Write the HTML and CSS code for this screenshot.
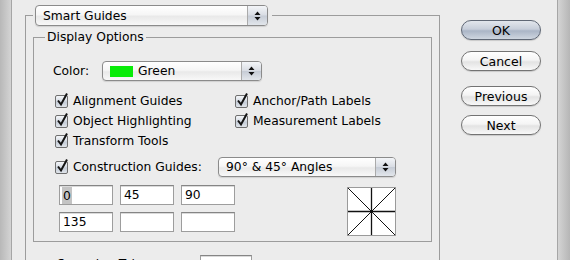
FILE: index.html
```html
<!DOCTYPE html>
<html lang="en">
<head>
  <meta charset="UTF-8">
  <title>Smart Guides</title>
  <link rel="stylesheet" href="styles.css">
</head>
<body>

  <div class="window">
    <fieldset class="group group-outer">
      <legend class="outer-legend">
        <div class="popup popup-smart">
          <span class="popup-label">Smart Guides</span>
          <span class="popup-arrows">
            <svg width="7" height="10" viewBox="0 0 7 10"><path d="M3.5 0.5 L6.5 4 L0.5 4 Z M0.5 6 L6.5 6 L3.5 9.5 Z" fill="#111"/></svg>
          </span>
        </div>
      </legend>

      <div class="outer-body">
        <fieldset class="group group-inner">
          <legend class="group-title">Display Options</legend>
          <div class="inner-body">

            <div class="color-row">
              <span class="row-label">Color:</span>
              <div class="popup popup-color">
                <span class="popup-label"><span class="swatch"></span>Green</span>
                <span class="popup-arrows">
                  <svg width="7" height="10" viewBox="0 0 7 10"><path d="M3.5 0.5 L6.5 4 L0.5 4 Z M0.5 6 L6.5 6 L3.5 9.5 Z" fill="#111"/></svg>
                </span>
              </div>
            </div>

            <div class="check-grid">
              <label class="check-item"><span class="checkbox"><svg viewBox="0 0 12 14"><path d="M2 7.5 L5 11.5 L11 0.5"/></svg></span>Alignment Guides</label>
              <label class="check-item"><span class="checkbox"><svg viewBox="0 0 12 14"><path d="M2 7.5 L5 11.5 L11 0.5"/></svg></span>Anchor/Path Labels</label>
              <label class="check-item"><span class="checkbox"><svg viewBox="0 0 12 14"><path d="M2 7.5 L5 11.5 L11 0.5"/></svg></span>Object Highlighting</label>
              <label class="check-item"><span class="checkbox"><svg viewBox="0 0 12 14"><path d="M2 7.5 L5 11.5 L11 0.5"/></svg></span>Measurement Labels</label>
              <label class="check-item"><span class="checkbox"><svg viewBox="0 0 12 14"><path d="M2 7.5 L5 11.5 L11 0.5"/></svg></span>Transform Tools</label>
            </div>

            <div class="construction-row">
              <label class="check-item"><span class="checkbox"><svg viewBox="0 0 12 14"><path d="M2 7.5 L5 11.5 L11 0.5"/></svg></span>Construction Guides:</label>
              <div class="popup popup-angles">
                <span class="popup-label">90° &amp; 45° Angles</span>
                <span class="popup-arrows">
                  <svg width="7" height="10" viewBox="0 0 7 10"><path d="M3.5 0.5 L6.5 4 L0.5 4 Z M0.5 6 L6.5 6 L3.5 9.5 Z" fill="#111"/></svg>
                </span>
              </div>
            </div>

            <div class="angles">
              <div class="angle-fields">
                <span class="field"><span class="selected">0</span></span>
                <span class="field">45</span>
                <span class="field">90</span>
                <span class="field">135</span>
                <span class="field"></span>
                <span class="field"></span>
              </div>
              <svg class="angle-preview" width="49" height="49" viewBox="0 0 49 49">
                <rect x="0.5" y="0.5" width="48" height="48" fill="#fff" stroke="#9a9a9a"/>
                <path d="M1 1 L48 48 M48 1 L1 48" stroke="#111" stroke-width="1"/>
                <path d="M24.5 1 L24.5 48 M1 24.5 L48 24.5" stroke="#111" stroke-width="1.3"/>
              </svg>
            </div>

          </div>
        </fieldset>

        <div class="tolerance-row">
          <span class="tolerance-label">Snapping Tolerance:</span>
          <span class="field field-small">4 pt</span>
        </div>
      </div>
    </fieldset>

    <div class="buttons">
      <button class="btn btn-default">OK</button>
      <button class="btn btn-cancel">Cancel</button>
      <button class="btn btn-prev">Previous</button>
      <button class="btn btn-next">Next</button>
    </div>
  </div>

</body>
</html>
```

FILE: styles.css
```css
body {
  margin: 0;
  height: 260px;
  overflow: hidden;
  display: flex;
  font-family: "DejaVu Sans", "Lucida Grande", sans-serif;
  font-size: 12.3px;
  color: #000;
  background: linear-gradient(90deg, #b8b8b8 0, #d4d4d4 11px, #d4d4d4 558px, #b6b6b6 570px);
}

.window {
  flex: 1;
  display: flex;
  align-items: flex-start;
  margin: 0 12px 0 11px;
  padding: 0 16px 0 13px;
  border-left: 1px solid #a6a6a6;
  border-right: 1px solid #a6a6a6;
  background-color: #ececec;
}

/* group boxes */

.group {
  padding: 0;
  min-width: 0;
  border: 1px solid #9c9c9c;
  box-sizing: border-box;
}

.group-outer {
  width: 415px;
  margin: 5px 0 0 0;
}

.outer-legend {
  margin-left: 7px;
  padding: 0 4px 0 2px;
}

.outer-body {
  padding: 0 7px;
}

.group-inner {
  margin: 4px 0 0 0;
}

.group-title {
  margin-left: 11px;
  padding: 0 2px;
  line-height: 14px;
}

.inner-body {
  padding: 0 35px 5px 19px;
}

/* popup menus */

.popup {
  display: flex;
  height: 20px;
  box-sizing: border-box;
  border: 1px solid #8b8b8b;
  border-radius: 4px;
  background: linear-gradient(#ffffff, #f6f6f6 45%, #e9e9e9 55%, #f8f8f8);
  box-shadow: 0 1px 1px rgba(0, 0, 0, 0.12);
}

.popup-smart {
  width: 233px;
  height: 21px;
}

.popup-color {
  width: 160px;
}

.popup-angles {
  width: 178px;
}

.popup-label {
  flex: 1;
  display: flex;
  align-items: center;
  padding-left: 7px;
  white-space: nowrap;
}

.popup-arrows {
  width: 19px;
  display: flex;
  align-items: center;
  justify-content: center;
  border-left: 1px solid #aaaaaa;
  border-radius: 0 3px 3px 0;
  background: linear-gradient(#f3f5f8, #d9dde4 48%, #c6ccd6 52%, #e2e6eb);
}

.swatch {
  width: 23px;
  height: 11px;
  margin-right: 5px;
  background-color: #08ec08;
}

/* rows */

.color-row {
  display: flex;
  align-items: center;
  margin-top: 17px;
}

.row-label {
  width: 49px;
}

.check-grid {
  display: grid;
  grid-template-columns: 180px auto;
  grid-auto-rows: 20px;
  margin: 10px 0 0 2px;
}

.check-item {
  display: flex;
  align-items: center;
  white-space: nowrap;
}

.checkbox {
  position: relative;
  flex: none;
  width: 13px;
  height: 13px;
  margin-right: 5px;
  box-sizing: border-box;
  border: 1px solid #6f6f6f;
  border-radius: 2px;
  background: linear-gradient(#f4f6f9, #d5dbe3 48%, #c3cbd6 52%, #e0e5eb);
}

.checkbox svg {
  position: absolute;
  left: 0;
  top: -3px;
  width: 12px;
  height: 14px;
  overflow: visible;
}

.checkbox path {
  fill: none;
  stroke: #151515;
  stroke-width: 2;
}

.construction-row {
  display: flex;
  align-items: center;
  justify-content: space-between;
  height: 20px;
  margin: 6px 0 0 2px;
}

/* angle fields */

.angles {
  display: flex;
  justify-content: space-between;
  align-items: flex-start;
  margin-top: 8px;
}

.angle-fields {
  display: grid;
  grid-template-columns: repeat(3, 54px);
  grid-auto-rows: 20px;
  gap: 7px;
  margin-left: 6px;
}

.field {
  display: flex;
  align-items: center;
  height: 20px;
  padding-left: 3px;
  box-sizing: border-box;
  border: 1px solid #9d9d9d;
  border-top-color: #858585;
  background-color: #fff;
  box-shadow: inset 0 1px 0 #dadada;
}

.field .selected {
  align-self: stretch;
  display: flex;
  align-items: center;
  margin: 1px 0 0 -1px;
  padding: 0 1px;
  background-color: #c4c4c4;
}

.angle-preview {
  margin-top: 2px;
}

.tolerance-row {
  display: flex;
  align-items: flex-start;
  margin-top: 13px;
  padding-left: 24px;
}

.tolerance-label {
  width: 143px;
  line-height: 16px;
  padding-top: 1px;
}

.field-small {
  width: 52px;
}

/* buttons */

.buttons {
  display: flex;
  flex-direction: column;
  width: 80px;
  margin-left: 21px;
  padding-top: 20px;
}

.btn {
  height: 20px;
  padding: 0;
  border: 1px solid #737373;
  border-radius: 10px;
  font-family: inherit;
  font-size: 12.5px;
  color: #000;
  background: linear-gradient(#ffffff, #f4f4f4 45%, #e3e3e3 55%, #f8f8f8);
  box-shadow: 0 1px 1px rgba(0, 0, 0, 0.15);
}

.btn-default {
  border-color: #5f6775;
  background: linear-gradient(#e2e6ec, #c7ceda 45%, #aab5c6 55%, #cfd6e0);
}

.btn-cancel {
  margin-top: 11px;
}

.btn-prev {
  margin-top: 15px;
}

.btn-next {
  margin-top: 9px;
}
```
